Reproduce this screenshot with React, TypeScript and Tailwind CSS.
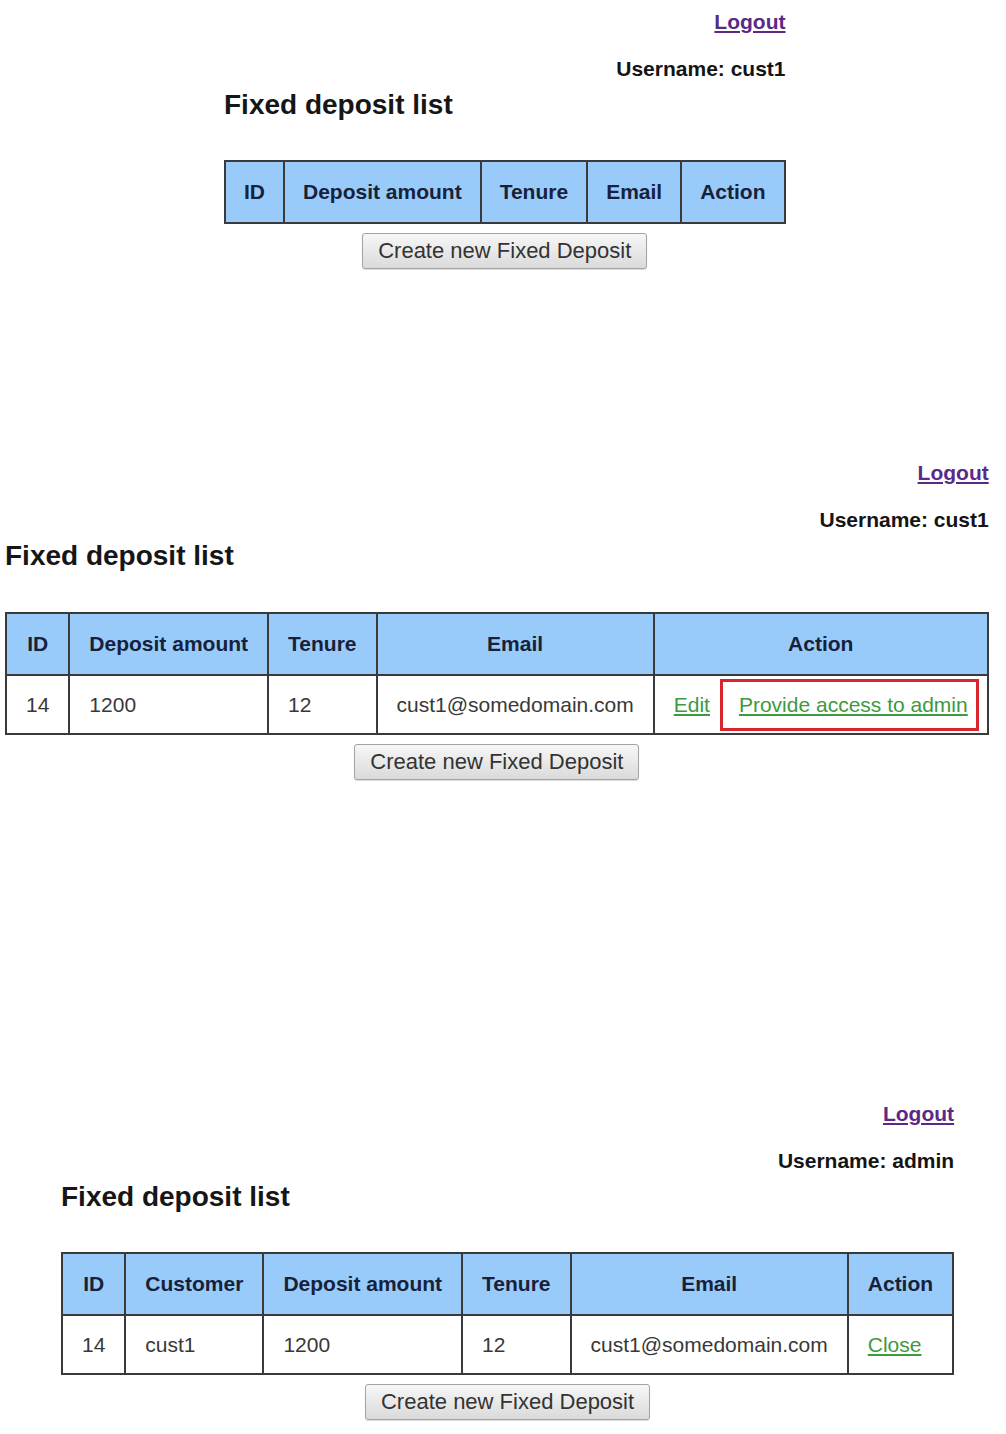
type Row = { cells: React.ReactNode[] }

type PanelProps = {
  username: string
  columns: string[]
  rows: Row[]
  className: string
  tableGap: string
  pad: string
}

const cellBorder = "border-2 border-[#3a3a3a]"

function DepositPanel({ username, columns, rows, className, tableGap, pad }: PanelProps) {
  return (
    <section className={`w-fit ${className}`}>
      <div className="text-right text-[21px] leading-6 font-bold">
        <a href="#" className="text-[#5a2a86] underline underline-offset-2">
          Logout
        </a>
      </div>
      <div className="mt-[23px] text-right text-[21px] leading-6 font-bold text-[#141414]">Username: {username}</div>
      <h2 className="mt-2 text-[28px] leading-8 font-bold text-[#161616]">Fixed deposit list</h2>

      <table className={`${tableGap} border-collapse border-2 border-[#3a3a3a] text-[21px] leading-6`}>
        <thead>
          <tr className="bg-[#99cbfa]">
            {columns.map((c) => (
              <th key={c} className={`${cellBorder} ${pad} py-[18px] text-center font-bold whitespace-nowrap text-[#17213a]`}>
                {c}
              </th>
            ))}
          </tr>
        </thead>
        <tbody>
          {rows.map((r, i) => (
            <tr key={i} className="bg-white">
              {r.cells.map((c, j) => (
                <td key={j} className={`${cellBorder} ${pad} py-[16.5px] text-left whitespace-nowrap text-[#383838]`}>
                  {c}
                </td>
              ))}
            </tr>
          ))}
        </tbody>
      </table>

      <div className="mt-[9px] flex justify-center">
        <button
          type="button"
          className="h-9 rounded-[3px] border border-[#a3a3a3] bg-gradient-to-b from-[#f7f7f7] to-[#dadada] px-[15px] text-[22px] leading-[26px] text-[#333] shadow-[0_1px_1px_rgba(0,0,0,0.15)]"
        >
          Create new Fixed Deposit
        </button>
      </div>
    </section>
  )
}

const greenLink = "text-[#3d9a3d] underline underline-offset-2"

export default function App() {
  return (
    <div className="min-h-[1434px] w-[1006px] bg-white font-['Liberation_Sans',Arial,sans-serif]">
      <DepositPanel
        className="ml-[224px] pt-[10px]"
        tableGap="mt-[39px]"
        pad="px-[18px]"
        username="cust1"
        columns={["ID", "Deposit amount", "Tenure", "Email", "Action"]}
        rows={[]}
      />

      <DepositPanel
        className="mt-[192px] ml-[5px]"
        tableGap="mt-[40px]"
        pad="px-[19px]"
        username="cust1"
        columns={["ID", "Deposit amount", "Tenure", "Email", "Action"]}
        rows={[
          {
            cells: [
              "14",
              "1200",
              "12",
              "cust1@somedomain.com",
              <span key="a" className="inline-flex items-center">
                <a href="#" className={greenLink}>
                  Edit
                </a>
                <span className="relative ml-[29px]">
                  <a href="#" className={greenLink}>
                    Provide access to admin
                  </a>
                  {/* highlight box drawn over the link */}
                  <span className="pointer-events-none absolute -top-[14px] -right-[11px] -bottom-[14px] -left-[19px] border-[3px] border-[#d7262e]" />
                </span>
              </span>,
            ],
          },
        ]}
      />

      <DepositPanel
        className="mt-[322px] ml-[61px]"
        tableGap="mt-[39px]"
        pad="px-[19px]"
        username="admin"
        columns={["ID", "Customer", "Deposit amount", "Tenure", "Email", "Action"]}
        rows={[
          {
            cells: [
              "14",
              "cust1",
              "1200",
              "12",
              "cust1@somedomain.com",
              <a key="c" href="#" className={greenLink}>
                Close
              </a>,
            ],
          },
        ]}
      />
    </div>
  )
}
